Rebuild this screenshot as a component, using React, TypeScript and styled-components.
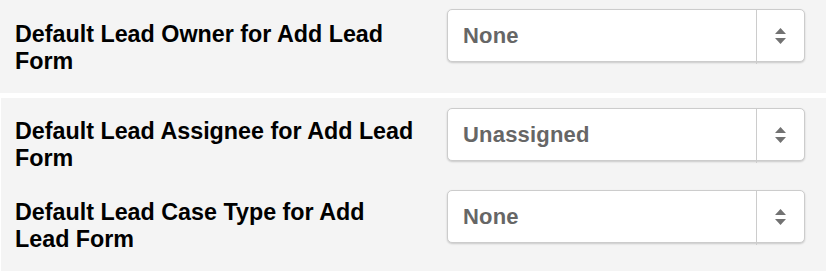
import React from 'react';
import styled, { createGlobalStyle } from 'styled-components';

const GlobalStyle = createGlobalStyle`
  html, body {
    margin: 0;
    padding: 0;
    background: #ffffff;
  }
  body {
    font-family: "Liberation Sans", Arial, Helvetica, sans-serif;
  }
`;

const Page = styled.div`
  width: 826px;
  display: flex;
  flex-direction: column;
  gap: 5px;
`;

const Panel = styled.div<{ $top: number; $inset?: boolean }>`
  background: #f4f4f4;
  padding: ${(p) => p.$top}px 21px 0 ${(p) => (p.$inset ? '14px' : '15px')};
  margin-left: ${(p) => (p.$inset ? '1px' : '0')};
`;

const Row = styled.div`
  display: flex;
  align-items: flex-start;
  justify-content: space-between;
  padding-bottom: 18px;
`;

const Label = styled.div<{ $offset: number }>`
  flex: 0 0 402px;
  padding-top: ${(p) => p.$offset}px;
  font-size: 23.3px;
  line-height: 27px;
  font-weight: bold;
  color: #000000;
`;

const Select = styled.div`
  flex: 0 0 358px;
  height: 53px;
  box-sizing: border-box;
  display: flex;
  align-items: stretch;
  background: #ffffff;
  border: 1px solid #cccccc;
  border-radius: 5px;
  box-shadow: 0 1px 2px rgba(0, 0, 0, 0.18);
`;

const Value = styled.div`
  flex: 1;
  display: flex;
  align-items: center;
  padding-left: 15px;
  font-size: 22px;
  letter-spacing: 0.2px;
  font-weight: bold;
  color: #666666;
`;

const Toggle = styled.div`
  flex: 0 0 47px;
  border-left: 1px solid #cccccc;
  display: flex;
  align-items: center;
  justify-content: center;
  margin-bottom: -3px;
  padding-bottom: 3px;
`;

const Arrows = () => (
  <svg width="13" height="18" viewBox="0 0 13 18">
    <path d="M6.5 1 L12 7 L1 7 Z" fill="#727272" />
    <path d="M1 11 L12 11 L6.5 17 Z" fill="#727272" />
  </svg>
);

const fields = [
  { label: 'Default Lead Owner for Add Lead Form', value: 'None', offset: 12 },
  { label: 'Default Lead Assignee for Add Lead Form', value: 'Unassigned', offset: 10 },
  { label: 'Default Lead Case Type for Add Lead Form', value: 'None', offset: 9 },
];

const Field = ({ label, value, offset }: { label: string; value: string; offset: number }) => (
  <Row>
    <Label $offset={offset}>{label}</Label>
    <Select>
      <Value>{value}</Value>
      <Toggle>
        <Arrows />
      </Toggle>
    </Select>
  </Row>
);

export default function App() {
  return (
    <Page>
      <GlobalStyle />
      <Panel $top={9}>
        <Field {...fields[0]} />
      </Panel>
      <Panel $top={10} $inset>
        <Field {...fields[1]} />
        <Field {...fields[2]} />
      </Panel>
    </Page>
  );
}
